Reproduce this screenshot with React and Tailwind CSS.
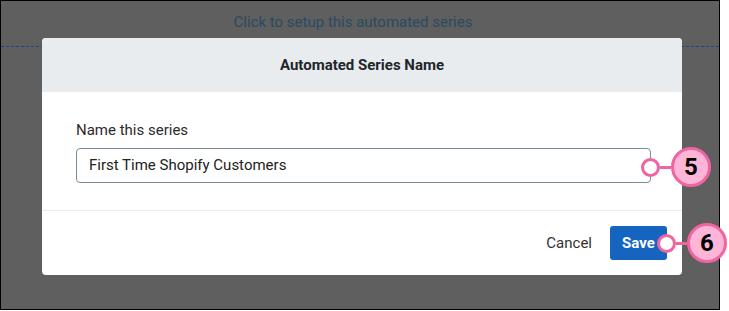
import React from 'react';

function Callout({ n, className }) {
  return (
    <div className={`absolute flex items-center ${className}`}>
      <div className="w-[19px] h-[19px] rounded-full bg-white border-[3px] border-[#f0649f]" />
      <div className="w-[11px] border-t-[3px] border-dashed border-[#f0649f]" />
      <div className="w-[40px] h-[40px] rounded-full bg-[#ffb5d8] border-[3px] border-[#f0649f] flex items-center justify-center text-[24px] font-bold text-black leading-none">
        {n}
      </div>
    </div>
  );
}

export default function App() {
  return (
    <div className="w-[729px] h-[311px] bg-white font-['Roboto',sans-serif]">
      <div className="relative w-[720px] h-[310px] border border-black bg-[#5e5f5e]">
        <div className="pt-[10px] pr-[14px] text-center text-[15px] leading-[22px] text-[#2b4a62]">
          Click to setup this automated series
        </div>
        <div className="mt-[13px] border-t border-dashed border-[#22438a]" />

        {/* modal */}
        <div className="absolute left-[41px] top-[37px] w-[640px] h-[237px] bg-white rounded-[4px] overflow-hidden flex flex-col">
          <div className="h-[54px] bg-[#e9ecef] flex items-center justify-center text-[15px] font-bold text-[#212529]">
            Automated Series Name
          </div>
          <div className="pl-[34px] pr-[31px] pt-[29px] h-[119px] border-b border-[#e9ecef]">
            <div className="text-[15px] leading-[18px] text-[#2b2b2b]">Name this series</div>
            <div className="mt-[9px] h-[35px] border border-[#7c8c98] rounded-[4px] flex items-center px-[12px] text-[15px] text-[#222]">
              First Time Shopify Customers
            </div>
          </div>
          <div className="flex-1 flex items-center justify-end pr-[15px] gap-[18px]">
            <span className="text-[15px] text-[#333]">Cancel</span>
            <div className="w-[57px] h-[34px] bg-[#1565c0] rounded-[3px] flex items-center justify-center text-[15px] font-bold text-white">
              Save
            </div>
          </div>
        </div>

        <Callout n="5" className="left-[640px] top-[146px]" />
        <Callout n="6" className="left-[656px] top-[222px]" />
      </div>
    </div>
  );
}
